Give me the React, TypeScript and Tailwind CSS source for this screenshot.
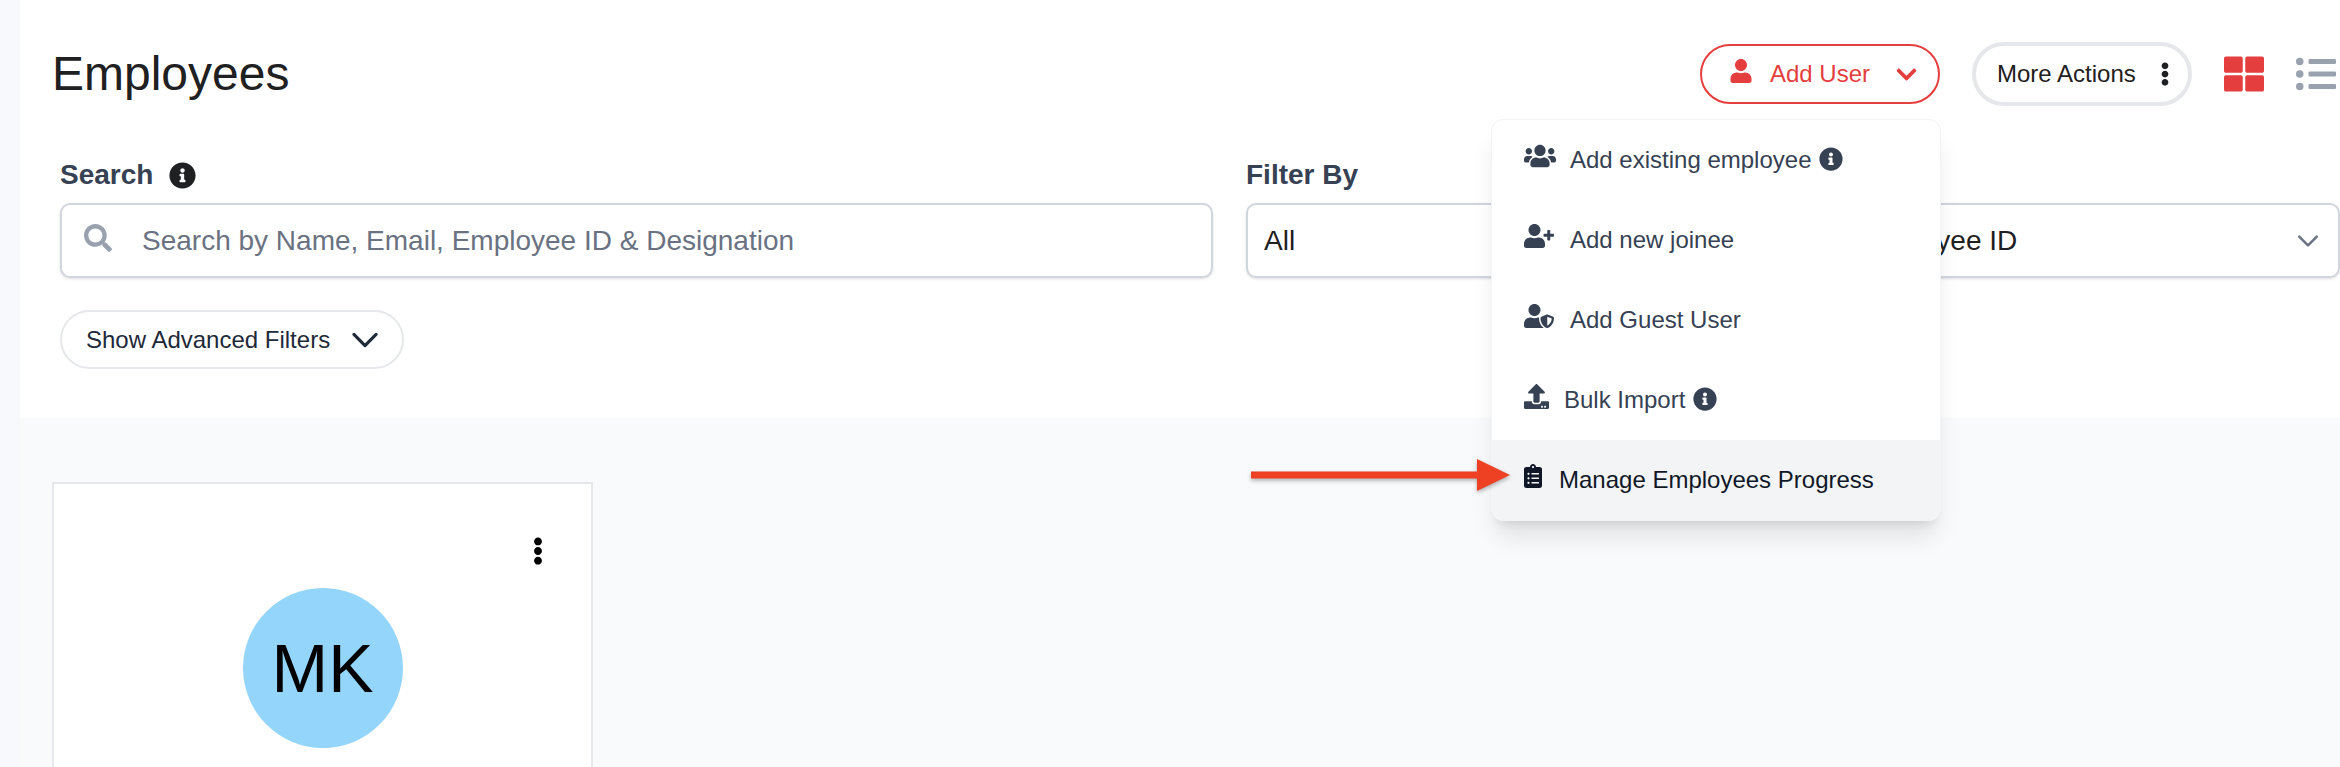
import { ReactNode } from 'react'
import {
  FaChevronDown,
  FaClipboardList,
  FaEllipsisV,
  FaInfoCircle,
  FaListUl,
  FaSearch,
  FaThLarge,
  FaUpload,
  FaUser,
  FaUserPlus,
  FaUserShield,
  FaUsers
} from 'react-icons/fa'

interface MenuRowProps {
  icon: ReactNode
  label: string
  info?: boolean
  active?: boolean
  gap: string
}

function MenuRow({ icon, label, info, active, gap }: MenuRowProps) {
  return (
    <div className={`h-20 flex items-center pl-[32px] text-2xl ${gap} ${active ? 'bg-gray-100 text-gray-900' : 'text-gray-700'}`}>
      <span className="-mt-[8px] flex">{icon}</span>
      <span className="flex items-center gap-[8px]">
        {label}
        {info && <FaInfoCircle className="-mt-[2px]" size={24} />}
      </span>
    </div>
  )
}

function SelectChevron() {
  return (
    <svg viewBox="0 0 20 20" className="w-[44px] h-[44px] text-gray-500" fill="none" stroke="currentColor" strokeWidth="1.1" strokeLinecap="round" strokeLinejoin="round">
      <path d="M6 8l4 4 4-4" />
    </svg>
  )
}

export default function App() {
  return (
    <div className="relative h-[767px] overflow-hidden bg-[#f8f9fc] font-['Liberation_Sans',Arial,sans-serif]">
      <div className="ml-[20px] h-full bg-[#f9fafb]">
        {/* Header panel */}
        <div className="h-[418px] bg-white">
          <div className="flex items-center justify-between pl-[32px] pr-[4px] pt-[42px]">
            <h1 className="text-5xl text-[#1f2021]">Employees</h1>
            <div className="flex items-center gap-8">
              <button className="h-[60px] w-[240px] rounded-full border-2 border-[#e53e3e] flex items-center pl-[27px] text-2xl text-[#e53e3e]">
                <FaUser className="-mt-[6px] mr-[17px]" size={24} />
                Add User
                <FaChevronDown className="ml-[25px]" size={23} />
              </button>
              <button className="h-[64px] w-[220px] rounded-full border-4 border-gray-200 flex items-center pl-[21px] text-2xl text-[#1f2021]">
                More Actions
                <FaEllipsisV className="ml-[17px]" size={24} />
              </button>
              <FaThLarge className="text-[#e53e3e]" size={40} />
              <FaListUl className="text-gray-400" size={40} />
            </div>
          </div>

          {/* Filters */}
          <div className="grid grid-cols-[1153px_557px_504px] gap-x-[33px] pl-[40px] pt-[53px]">
            <div>
              <div className="flex items-center gap-[16px] text-[28px] leading-[32px] font-bold text-gray-700">
                Search
                <FaInfoCircle className="text-[#1f2021]" size={27} />
              </div>
              <div className="mt-[12px] h-[75px] rounded-[10px] border-2 border-gray-300 shadow-sm flex items-center pl-[22px]">
                <FaSearch className="text-gray-400 -mt-[6px]" size={28} />
                <input
                  className="ml-[30px] flex-1 bg-transparent text-[28px] outline-none placeholder:text-gray-500"
                  placeholder="Search by Name, Email, Employee ID & Designation"
                />
              </div>
            </div>
            <div>
              <div className="text-[28px] leading-[32px] font-bold text-gray-700">Filter By</div>
              <div className="mt-[12px] h-[75px] rounded-[10px] border-2 border-gray-300 shadow-sm flex items-center pl-[16px] text-[28px] text-[#1f2021]">
                All
              </div>
            </div>
            <div>
              <div className="text-[28px] leading-[32px] font-bold text-gray-700">Sort By</div>
              <div className="mt-[12px] h-[75px] rounded-[10px] border-2 border-gray-300 shadow-sm flex items-center justify-between pl-[19px] pr-[8px] text-[28px] text-[#1f2021]">
                Employee ID
                <SelectChevron />
              </div>
            </div>
          </div>

          <div className="pl-[40px] pt-[32px]">
            <button className="h-[59px] w-[344px] rounded-full border-2 border-gray-200 flex items-center pl-[24px] text-2xl text-gray-800">
              Show Advanced Filters
              <svg viewBox="0 0 24 24" className="ml-[16px] w-[38px] h-[38px]" fill="none" stroke="currentColor" strokeWidth="2" strokeLinecap="round" strokeLinejoin="round">
                <path d="M5 8.5l7 7 7-7" />
              </svg>
            </button>
          </div>
        </div>

        {/* Employee card */}
        <div className="pl-[32px] pt-[64px]">
          <div className="w-[541px] h-[400px] border-2 border-gray-200 bg-white pt-[53px]">
            <div className="flex justify-end pr-[39px]">
              <FaEllipsisV className="text-black" size={28} />
            </div>
            <div className="mt-[23px] mx-auto w-[160px] h-[160px] rounded-full bg-[#93d5fb] flex items-center justify-center text-[68px] text-black">
              MK
            </div>
          </div>
        </div>
      </div>

      {/* Add User dropdown */}
      <div className="absolute left-[1491px] top-[119px] w-[450px] rounded-[12px] border border-gray-100 bg-white shadow-xl overflow-hidden">
        <MenuRow icon={<FaUsers size={32} />} label="Add existing employee" info gap="gap-[14px]" />
        <MenuRow icon={<FaUserPlus size={30} />} label="Add new joinee" gap="gap-[16px]" />
        <MenuRow icon={<FaUserShield size={30} />} label="Add Guest User" gap="gap-[16px]" />
        <MenuRow icon={<FaUpload size={25} />} label="Bulk Import" info gap="gap-[15px]" />
        <MenuRow icon={<FaClipboardList className="-ml-[3px]" size={24} />} label="Manage Employees Progress" active gap="gap-[14px]" />
      </div>

      {/* Annotation arrow */}
      <svg className="absolute left-[1245px] top-[451px] drop-shadow-[0_2px_2px_rgba(0,0,0,0.3)]" width="270" height="46" viewBox="0 0 270 46">
        <path d="M6 20.5h226v-12.5l33 16-33 16v-12.5H6z" fill="#ee4124" />
      </svg>
    </div>
  )
}
